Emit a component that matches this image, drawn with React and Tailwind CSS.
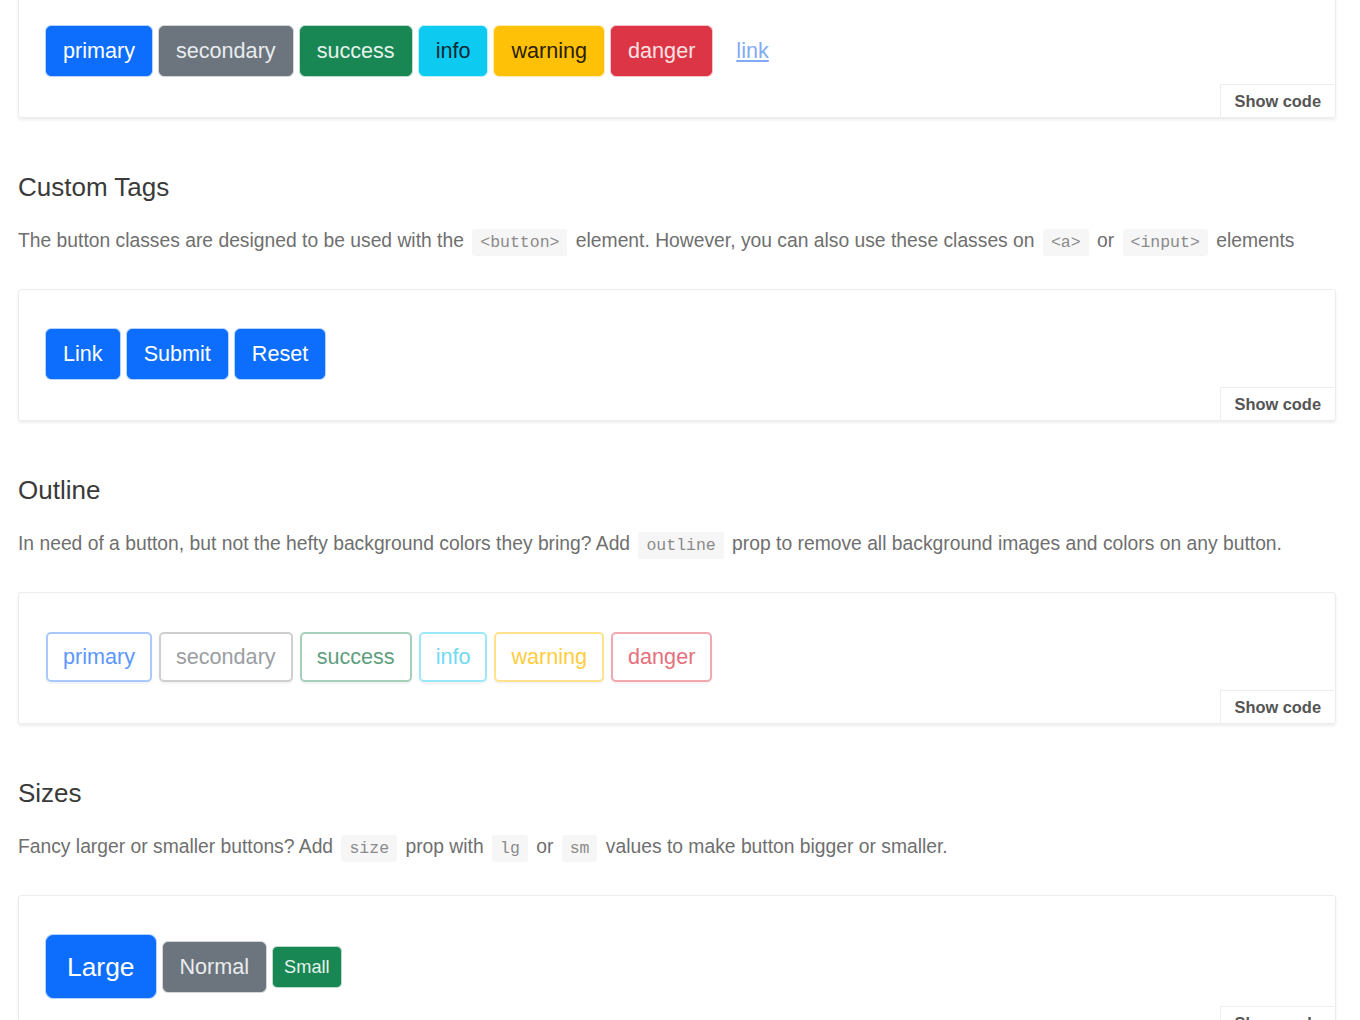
import React from "react";

const solid = [
  { label: "primary", cls: "bg-[#0d6efd] border-[#0d6efd] text-white shadow-[0_0_0_1px_rgba(13,110,253,0.3)]" },
  { label: "secondary", cls: "bg-[#6c757d] border-[#6c757d] text-[#e9ecef] shadow-[0_0_0_1px_rgba(108,117,125,0.3)]" },
  { label: "success", cls: "bg-[#198754] border-[#198754] text-[#e6f2ec] shadow-[0_0_0_1px_rgba(25,135,84,0.3)]" },
  { label: "info", cls: "bg-[#0dcaf0] border-[#0dcaf0] text-[#0b2b33] shadow-[0_0_0_1px_rgba(13,202,240,0.3)]" },
  { label: "warning", cls: "bg-[#ffc107] border-[#ffc107] text-[#2a2100] shadow-[0_0_0_1px_rgba(255,193,7,0.3)]" },
  { label: "danger", cls: "bg-[#dc3545] border-[#dc3545] text-[#fbe3e5] shadow-[0_0_0_1px_rgba(220,53,69,0.3)]" },
];

const outline = [
  { label: "primary", cls: "border-[#a9c9fd] text-[#5b97fd]" },
  { label: "secondary", cls: "border-[#cdcfd1] text-[#9a9ea2]" },
  { label: "success", cls: "border-[#a6d0bc] text-[#5e9e80]" },
  { label: "info", cls: "border-[#9be8f8] text-[#6fdaf2]" },
  { label: "warning", cls: "border-[#ffe28c] text-[#ffcd3d]" },
  { label: "danger", cls: "border-[#f1a8af] text-[#e5707b]" },
];

function Code({ children }) {
  return (
    <code className="mx-[3px] rounded-[3px] bg-[#f6f6f6] px-[8px] py-[4px] font-['Liberation_Mono',monospace] text-[16.5px] text-[#8a8a8a]">
      {children}
    </code>
  );
}

function Btn({ className, children }) {
  return (
    <button
      type="button"
      className={`rounded-[5px] border px-[16px] py-[8px] text-[21.6px] leading-[32px] ${className}`}
    >
      {children}
    </button>
  );
}

function Example({ children }) {
  return (
    <div className="relative rounded-[3px] border border-[#ececec] px-[27px] pb-[41px] pt-[39px] shadow-[0_2px_3px_rgba(0,0,0,0.07)]">
      <div className="flex items-center gap-[7px]">{children}</div>
      <div className="absolute bottom-0 right-[1px] flex h-[33px] items-center border-l border-t border-[#eeeeee] bg-white px-[13px] text-[16.4px] font-bold text-[#555]">
        Show code
      </div>
    </div>
  );
}

function Section({ title, children }) {
  return (
    <>
      <h4 className="mt-[54px] text-[26px] leading-[31px] text-[#3a3a3a]">{title}</h4>
      <p className="mb-[32px] mt-[24px] text-[19.3px] leading-[28px] text-[#6f6f6f]">{children}</p>
    </>
  );
}

export default function App() {
  return (
    <main className="h-[1020px] overflow-hidden bg-white pl-[18px] pr-[24px] font-['Liberation_Sans',Arial,sans-serif]">
      <div className="-mt-[14px]">
        <Example>
          {solid.map((b) => (
            <Btn key={b.label} className={b.cls}>
              {b.label}
            </Btn>
          ))}
          <Btn className="border-transparent text-[#7fabf6] underline">link</Btn>
        </Example>
      </div>

      <Section title="Custom Tags">
        The button classes are designed to be used with the <Code>&lt;button&gt;</Code> element. However,
        you can also use these classes on <Code>&lt;a&gt;</Code> or <Code>&lt;input&gt;</Code> elements
      </Section>
      <Example>
        {["Link", "Submit", "Reset"].map((t) => (
          <Btn key={t} className="bg-[#0d6efd] border-[#0d6efd] text-white shadow-[0_0_0_1px_rgba(13,110,253,0.3)]">
            {t}
          </Btn>
        ))}
      </Example>

      <Section title="Outline">
        In need of a button, but not the hefty background colors they bring? Add <Code>outline</Code> prop
        to remove all background images and colors on any button.
      </Section>
      <Example>
        {outline.map((b) => (
          <button
            key={b.label}
            type="button"
            className={`rounded-[5px] border-2 bg-white px-[15px] py-[7px] text-[21.6px] leading-[32px] shadow-[0_2px_2px_rgba(0,0,0,0.05)] ${b.cls}`}
          >
            {b.label}
          </button>
        ))}
      </Example>

      <Section title="Sizes">
        Fancy larger or smaller buttons? Add <Code>size</Code> prop with <Code>lg</Code> or <Code>sm</Code>{" "}
        values to make button bigger or smaller.
      </Section>
      <Example>
        <button
          type="button"
          className="rounded-[7px] border border-[#0d6efd] bg-[#0d6efd] px-[20px] py-[10.5px] text-[26.4px] leading-[40px] text-white shadow-[0_0_0_1px_rgba(13,110,253,0.3)]"
        >
          Large
        </button>
        <Btn className="bg-[#6c757d] border-[#6c757d] text-[#e9ecef] shadow-[0_0_0_1px_rgba(108,117,125,0.3)]">
          Normal
        </Btn>
        <button
          type="button"
          className="rounded-[4px] border border-[#198754] bg-[#198754] px-[10px] py-[5px] text-[18.2px] leading-[28px] text-[#e6f2ec] shadow-[0_0_0_1px_rgba(25,135,84,0.3)]"
        >
          Small
        </button>
      </Example>
    </main>
  );
}
